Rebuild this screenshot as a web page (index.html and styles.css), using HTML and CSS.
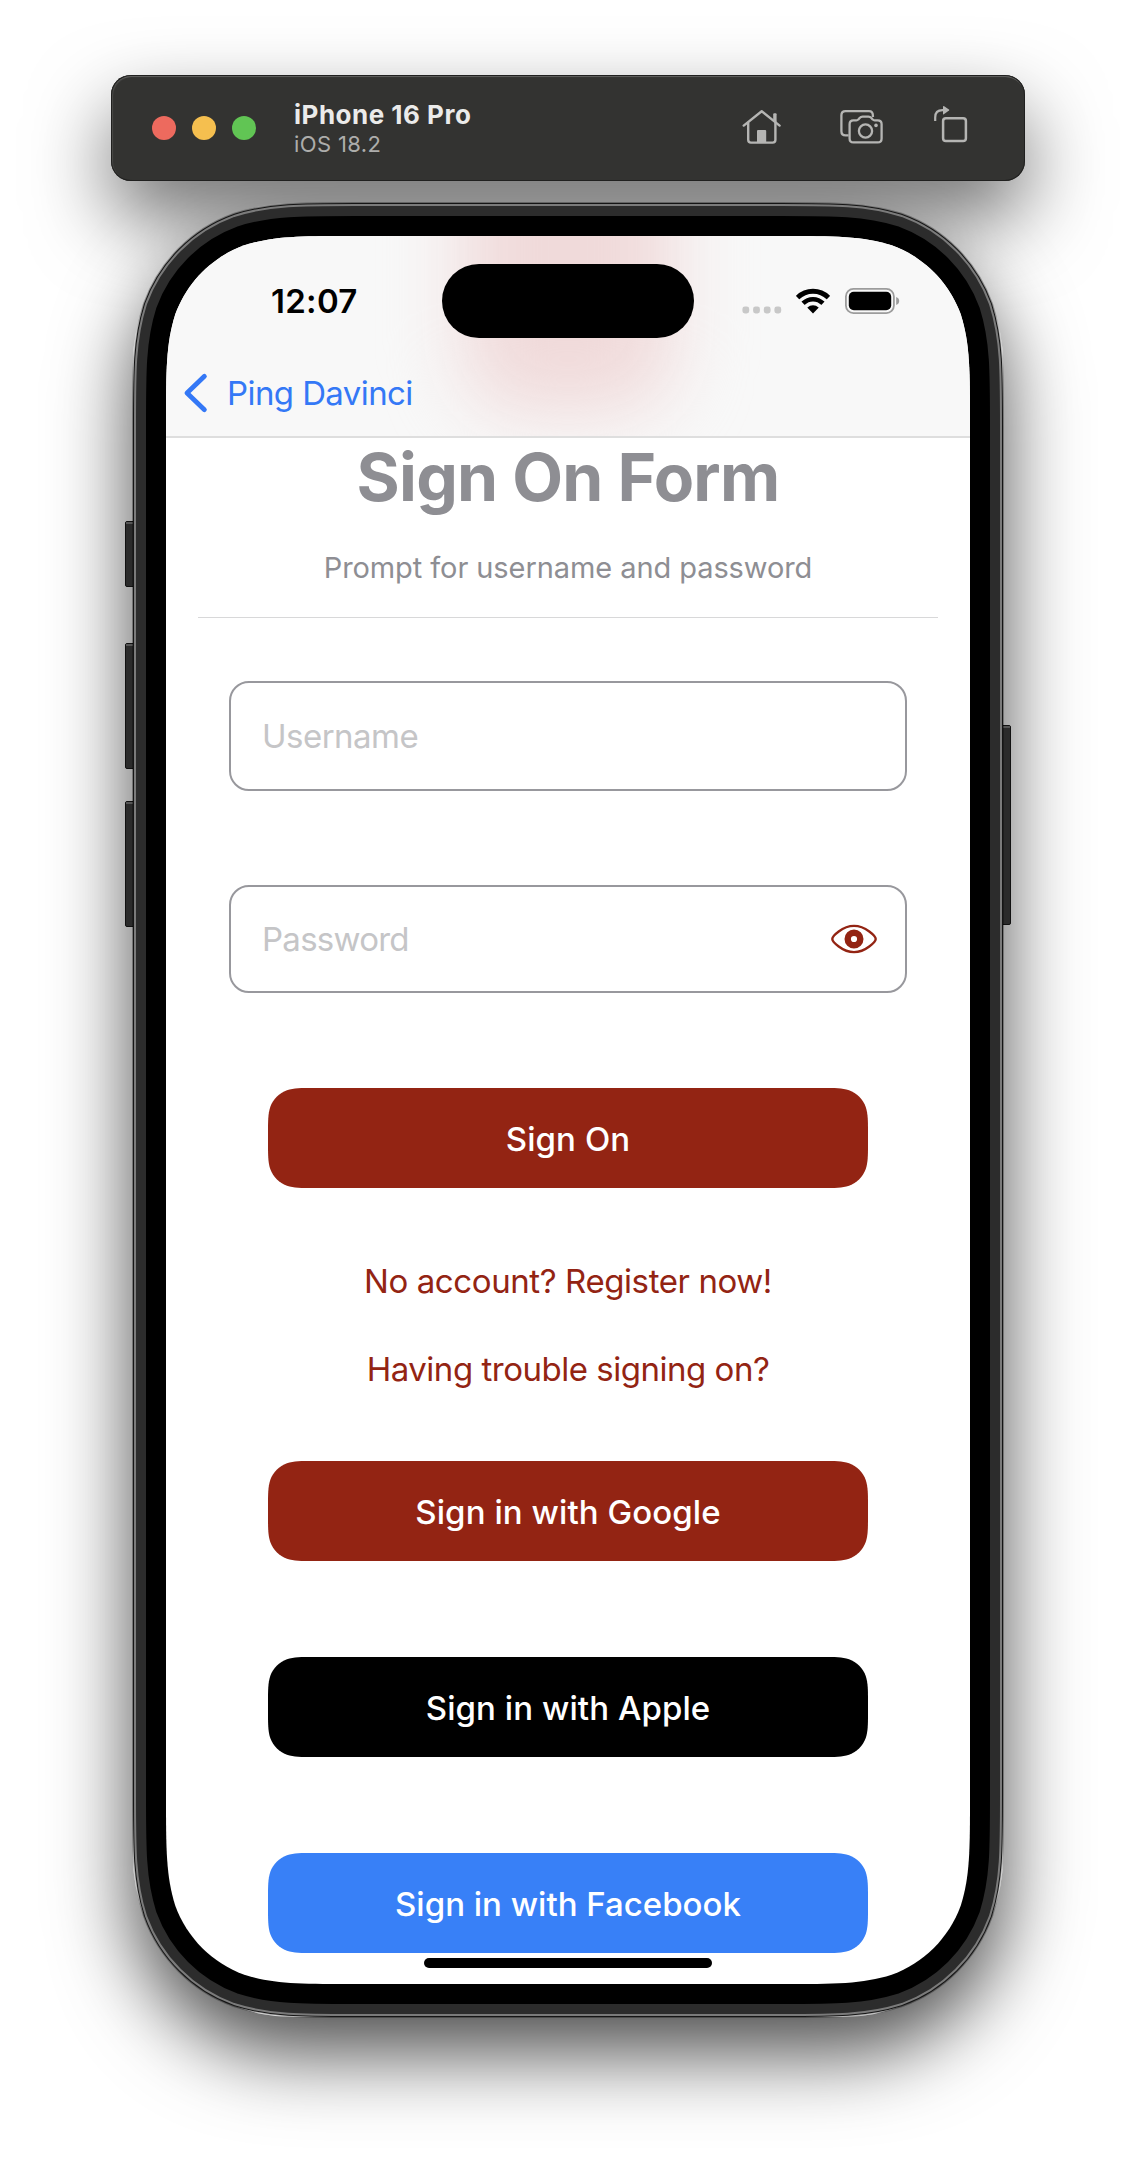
FILE: index.html
```
<!DOCTYPE html>
<html lang="en">
<head>
<meta charset="utf-8">
<title>Sign On Form</title>
<link rel="stylesheet" href="styles.css">
</head>
<body>
<header class="simbar">
  <div class="lights"><i class="light red"></i><i class="light yellow"></i><i class="light green"></i></div>
  <div class="device">
    <strong class="device-name">iPhone 16 Pro</strong>
    <span class="device-os">iOS 18.2</span>
  </div>
  <div class="tools">
    <svg width="42" height="44" viewBox="0 -4 42 44" fill="none" stroke="#b5b5b3" stroke-width="2.4" stroke-linecap="round" stroke-linejoin="round">
      <path d="M3.7 17.6 21.7 3.2 39.6 17.6"/>
      <path d="M8.2 15V31.8Q8.2 34.6 11 34.6H32.6Q35.4 34.6 35.4 31.8V15"/>
      <path d="M33.2 12V6.2Q33.2 5.2 34.2 5.2H35.6Q36.6 5.2 36.6 6.2V14.5Z" fill="#b5b5b3" stroke="none"/>
      <path d="M17 35V23Q17 22 18 22H25.2Q26.2 22 26.2 23V35Z" fill="#b5b5b3" stroke="none"/>
    </svg>
    <svg class="tool-camera" width="47" height="44" viewBox="0 -3 47 44" fill="none" stroke="#b5b5b3" stroke-width="2.3" stroke-linecap="butt" stroke-linejoin="round">
      <path d="M10.6 28.4H7.6Q3.4 28.4 3.4 24.2V8.3Q3.4 4.1 7.6 4.1H31Q34.9 4.1 34.9 8.6V10"/>
      <path d="M15.4 13.4H18.3Q19.6 13.4 20.4 12.4L21.6 11Q22.8 9.6 24.6 9.6H30.4Q32.2 9.6 33.4 11L34.6 12.4Q35.4 13.4 36.7 13.4H39.7Q43.6 13.4 43.6 17.3V31.4Q43.6 35.4 39.7 35.4H15.4Q11.6 35.4 11.6 31.4V17.3Q11.6 13.4 15.4 13.4Z"/>
      <circle cx="27.5" cy="24" r="6.6"/>
      <circle cx="38" cy="18.4" r="1.8" fill="#b5b5b3" stroke="none"/>
    </svg>
    <svg class="tool-rotate" width="37" height="44" viewBox="0 0 37 44" fill="none" stroke="#b5b5b3" stroke-width="2.2">
      <path d="M3.2 17V13.4Q3.2 6.2 10.5 6.2H12"/>
      <path d="M11 2.4Q11 1.6 11.8 2.1L17 5.6Q17.6 6.1 17 6.6L11.8 10.3Q11 10.8 11 10Z" fill="#b5b5b3" stroke="none"/>
      <rect x="11.1" y="14.2" width="22.8" height="22.8" rx="2.8" stroke-width="2.5"/>
    </svg>
  </div>
</header>

<div class="phone">
  <svg class="frame" width="870" height="1814" viewBox="-33 -33 870 1814" fill="none">
    <defs>
      <path id="outline" d="M189.55 0H614.45C669.03 0 696.32 0 725.69 9.29C757.77 20.96 783.04 46.23 794.71 78.31C804 107.68 804 134.97 804 189.55V1558.45C804 1613.03 804 1640.32 794.71 1669.69C783.04 1701.77 757.77 1727.04 725.69 1738.71C696.32 1748 669.03 1748 614.45 1748H189.55C134.97 1748 107.68 1748 78.31 1738.71C46.23 1727.04 20.96 1701.77 9.29 1669.69C0 1640.32 0 1613.03 0 1558.45V189.55C0 134.97 0 107.68 9.29 78.31C20.96 46.23 46.23 20.96 78.31 9.29C107.68 0 134.97 0 189.55 0Z"/>
    </defs>
    <g fill="#2b2b2b" stroke="#111" stroke-width="1">
      <rect x="-40.5" y="285.5" width="14" height="65" rx="1.5"/>
      <rect x="-40.5" y="407.5" width="14" height="125" rx="1.5"/>
      <rect x="-40.5" y="565.5" width="14" height="125" rx="1.5"/>
      <rect x="830.5" y="489.5" width="14" height="199" rx="1.5"/>
    </g>
    <g stroke="#666" stroke-width="1.5">
      <path d="M-40 286.9H-33M-40 408.9H-33M-40 566.9H-33M837 490.9H844"/>
    </g>
    <use href="#outline" stroke="rgba(0,0,0,.3)" stroke-width="68"/>
    <use href="#outline" stroke="#151515" stroke-width="66"/>
    <use href="#outline" stroke="#7b7b7b" stroke-width="64"/>
    <use href="#outline" stroke="#2c2c2c" stroke-width="60"/>
    <use href="#outline" stroke="#000" fill="#000" stroke-width="40"/>
  </svg>

  <main class="screen">
    <div class="navbar">
      <div class="glow"></div>
      <div class="status">
        <span class="time">12:07</span>
        <div class="island"></div>
        <div class="indicators">
          <svg width="40" height="26" viewBox="0 0 40 26" fill="#c8c8c8">
            <rect x=".4" y="18.6" width="6.8" height="6.8" rx="2.4"/><rect x="11.1" y="18.6" width="6.8" height="6.8" rx="2.4"/><rect x="21.8" y="18.6" width="6.8" height="6.8" rx="2.4"/><rect x="32.4" y="18.6" width="6.8" height="6.8" rx="2.4"/>
          </svg>
          <svg class="wifi" width="34" height="26" viewBox="0 0 34 26" fill="none" stroke="#000">
            <clipPath id="fan"><path d="M17 25.4-3 5V-2H37V5Z"/></clipPath>
            <g clip-path="url(#fan)">
              <circle cx="17" cy="25" r="21.8" stroke-width="5"/>
              <circle cx="17" cy="25" r="13.8" stroke-width="4.6"/>
              <circle cx="17" cy="25" r="7.8" fill="#000" stroke="none"/>
            </g>
          </svg>
          <svg class="battery" width="55" height="26" viewBox="0 0 55 26">
            <rect x=".9" y=".9" width="48" height="24.2" rx="7.6" fill="none" stroke="#9c9c9c" stroke-width="1.8"/>
            <rect x="3.8" y="3.8" width="42.4" height="18.4" rx="5" fill="#000"/>
            <path d="M51.2 9Q54.2 10.2 54.2 13T51.2 17Z" fill="#9c9c9c"/>
          </svg>
        </div>
      </div>
      <a class="back">
        <svg width="27" height="42" viewBox="0 0 27 42" fill="none" stroke="#3478f6" stroke-width="4.8" stroke-linecap="round" stroke-linejoin="round"><path d="M22.4 4.3 5 21 22.4 37.7"/></svg>
        <span>Ping Davinci</span>
      </a>
    </div>

    <h1 class="title">Sign On Form</h1>
    <p class="subtitle">Prompt for username and password</p>
    <hr class="divider">

    <div class="field username"><span>Username</span></div>
    <div class="field password">
      <span>Password</span>
      <svg width="48" height="32" viewBox="0 0 48 32" fill="none" stroke="#932413">
        <path d="M2.3 16C2.3 13.6 12.2 2.9 24 2.9S45.7 13.6 45.7 16 35.8 29.1 24 29.1 2.3 18.4 2.3 16Z" stroke-width="2.4"/>
        <circle cx="24" cy="16" r="6.3" stroke-width="6.4"/>
      </svg>
    </div>

    <button class="btn sign-on">Sign On</button>
    <a class="link register">No account? Register now!</a>
    <a class="link trouble">Having trouble signing on?</a>
    <button class="btn google">Sign in with Google</button>
    <button class="btn apple">Sign in with Apple</button>
    <button class="btn facebook">Sign in with Facebook</button>
    <div class="home-indicator"></div>
  </main>
</div>
</body>
</html>
```
FILE: styles.css
```
* { box-sizing: border-box; }

body {
  margin: 0;
  height: 2168px;
  padding-top: 75px;
  display: flex;
  flex-direction: column;
  align-items: center;
  background: #fff;
  font-family: Inter, "Liberation Sans", sans-serif;
  overflow: hidden;
  isolation: isolate;
}

/* Simulator window bar */
.simbar {
  position: relative;
  width: 914px;
  height: 106px;
  flex: none;
  display: flex;
  align-items: center;
  padding: 0 56px 0 41px;
  border-radius: 20px;
  background: #333331;
  box-shadow: inset 0 0 0 1px #20201f, inset 0 2px 0 0 #5d5d5b, inset 1px 1px 1px 1px #4a4a48;
}
.simbar::before {
  content: "";
  position: absolute;
  inset: 0;
  z-index: -1;
  border-radius: 20px;
  box-shadow: 0 36px 80px rgba(0, 0, 0, .56);
}
.lights { display: flex; gap: 16px; }
.light { width: 24px; height: 24px; border-radius: 50%; }
.red { background: #ed6a5e; }
.yellow { background: #f5bf4f; }
.green { background: #61c554; }
.device { display: flex; flex-direction: column; margin-left: 38px; }
.device-name { font-size: 26px; font-weight: 700; line-height: 31px; letter-spacing: .5px; color: #ebebea; }
.device-os { font-size: 22px; line-height: 28px; letter-spacing: .37px; color: #adadab; }
.tools { display: flex; margin: -4px 0 0 auto; }
.tool-camera { margin-left: 56px; }
.tool-rotate { margin-left: 47px; }

/* Phone body */
.phone {
  position: relative;
  width: 870px;
  height: 1814px;
  flex: none;
  margin-top: 22px;
  padding: 33px;
}
.phone::before {
  content: "";
  position: absolute;
  inset: 0;
  z-index: -1;
  border-radius: 160px;
  box-shadow: 0 36px 80px rgba(0, 0, 0, .7);
}
.frame { position: absolute; inset: 0; overflow: visible; }

.screen {
  position: relative;
  width: 804px;
  height: 1748px;
  display: flex;
  flex-direction: column;
  align-items: center;
  background: #fff;
  clip-path: path("M189.55 0H614.45C669.03 0 696.32 0 725.69 9.29C757.77 20.96 783.04 46.23 794.71 78.31C804 107.68 804 134.97 804 189.55V1558.45C804 1613.03 804 1640.32 794.71 1669.69C783.04 1701.77 757.77 1727.04 725.69 1738.71C696.32 1748 669.03 1748 614.45 1748H189.55C134.97 1748 107.68 1748 78.31 1738.71C46.23 1727.04 20.96 1701.77 9.29 1669.69C0 1640.32 0 1613.03 0 1558.45V189.55C0 134.97 0 107.68 9.29 78.31C20.96 46.23 46.23 20.96 78.31 9.29C107.68 0 134.97 0 189.55 0Z");
}

/* Navigation bar */
.navbar {
  position: relative;
  width: 100%;
  height: 202px;
  padding-top: 28px;
  border-bottom: 2px solid #dedede;
  background: #f8f8f8;
  overflow: hidden;
}
.glow {
  position: absolute;
  left: 296px;
  top: -120px;
  width: 212px;
  height: 296px;
  border-radius: 0 0 60px 60px;
  background: #f0dada;
  filter: blur(36px);
}
.status {
  position: relative;
  display: grid;
  grid-template-columns: 276px 252px 1fr;
  align-items: center;
  height: 74px;
}
.time { padding: 0 0 0 105px; font-size: 33px; font-weight: 600; letter-spacing: .3px; color: #000; }
.island { height: 74px; border-radius: 37px; background: #000; }
.indicators { display: flex; padding-left: 48px; }
.wifi { margin-left: 14px; }
.battery { margin-left: 15px; }
.back {
  position: relative;
  display: flex;
  align-items: center;
  height: 98px;
  padding: 11px 0 0 16px;
  gap: 18px;
  font-size: 33px;
  letter-spacing: -.59px;
  color: #3478f6;
}

/* Form */
.title { margin: 0; font-size: 66px; font-weight: 700; line-height: 78px; letter-spacing: -.76px; color: #8e8e93; }
.subtitle { margin: 32px 0 0; font-size: 29px; line-height: 40px; letter-spacing: -.08px; color: #8e8e93; }
.divider { width: 740px; height: 1px; margin: 29px 0 0; border: 0; background: #d8d8d9; }
.field {
  display: flex;
  align-items: center;
  justify-content: space-between;
  width: 678px;
  padding: 0 27px 0 31px;
  border: 2px solid #98989d;
  border-radius: 20px;
  font-size: 33px;
  letter-spacing: -.51px;
  color: #c5c5c7;
}
.username { height: 110px; margin-top: 63px; }
.password { height: 108px; margin-top: 94px; letter-spacing: -.74px; }

.btn {
  width: 600px;
  height: 100px;
  padding: 1px 0 0;
  border: 0;
  clip-path: path("M45.86 0H554.14C567.35 0 573.95 0 581.06 2.25C588.82 5.07 594.93 11.18 597.75 18.94C600 26.05 600 32.65 600 45.86V54.14C600 67.35 600 73.95 597.75 81.06C594.93 88.82 588.82 94.93 581.06 97.75C573.95 100 567.35 100 554.14 100H45.86C32.65 100 26.05 100 18.94 97.75C11.18 94.93 5.07 88.82 2.25 81.06C0 73.95 0 67.35 0 54.14V45.86C0 32.65 0 26.05 2.25 18.94C5.07 11.18 11.18 5.07 18.94 2.25C26.05 0 32.65 0 45.86 0Z");
  background: #932413;
  color: #fff;
  font-family: inherit;
  font-size: 33px;
  font-weight: 500;
  letter-spacing: .07px;
}
.sign-on { margin-top: 95px; }
.google { margin-top: 72px; }
.apple { margin-top: 96px; background: #000; }
.facebook { margin-top: 96px; background: #3880f7; letter-spacing: 0; }

.link { font-size: 33px; line-height: 40px; color: #932413; }
.register { margin-top: 73px; letter-spacing: -.41px; }
.trouble { margin-top: 48px; letter-spacing: -.48px; }

.home-indicator { width: 288px; height: 10px; margin-top: 5px; border-radius: 5px; background: #000; }
```
